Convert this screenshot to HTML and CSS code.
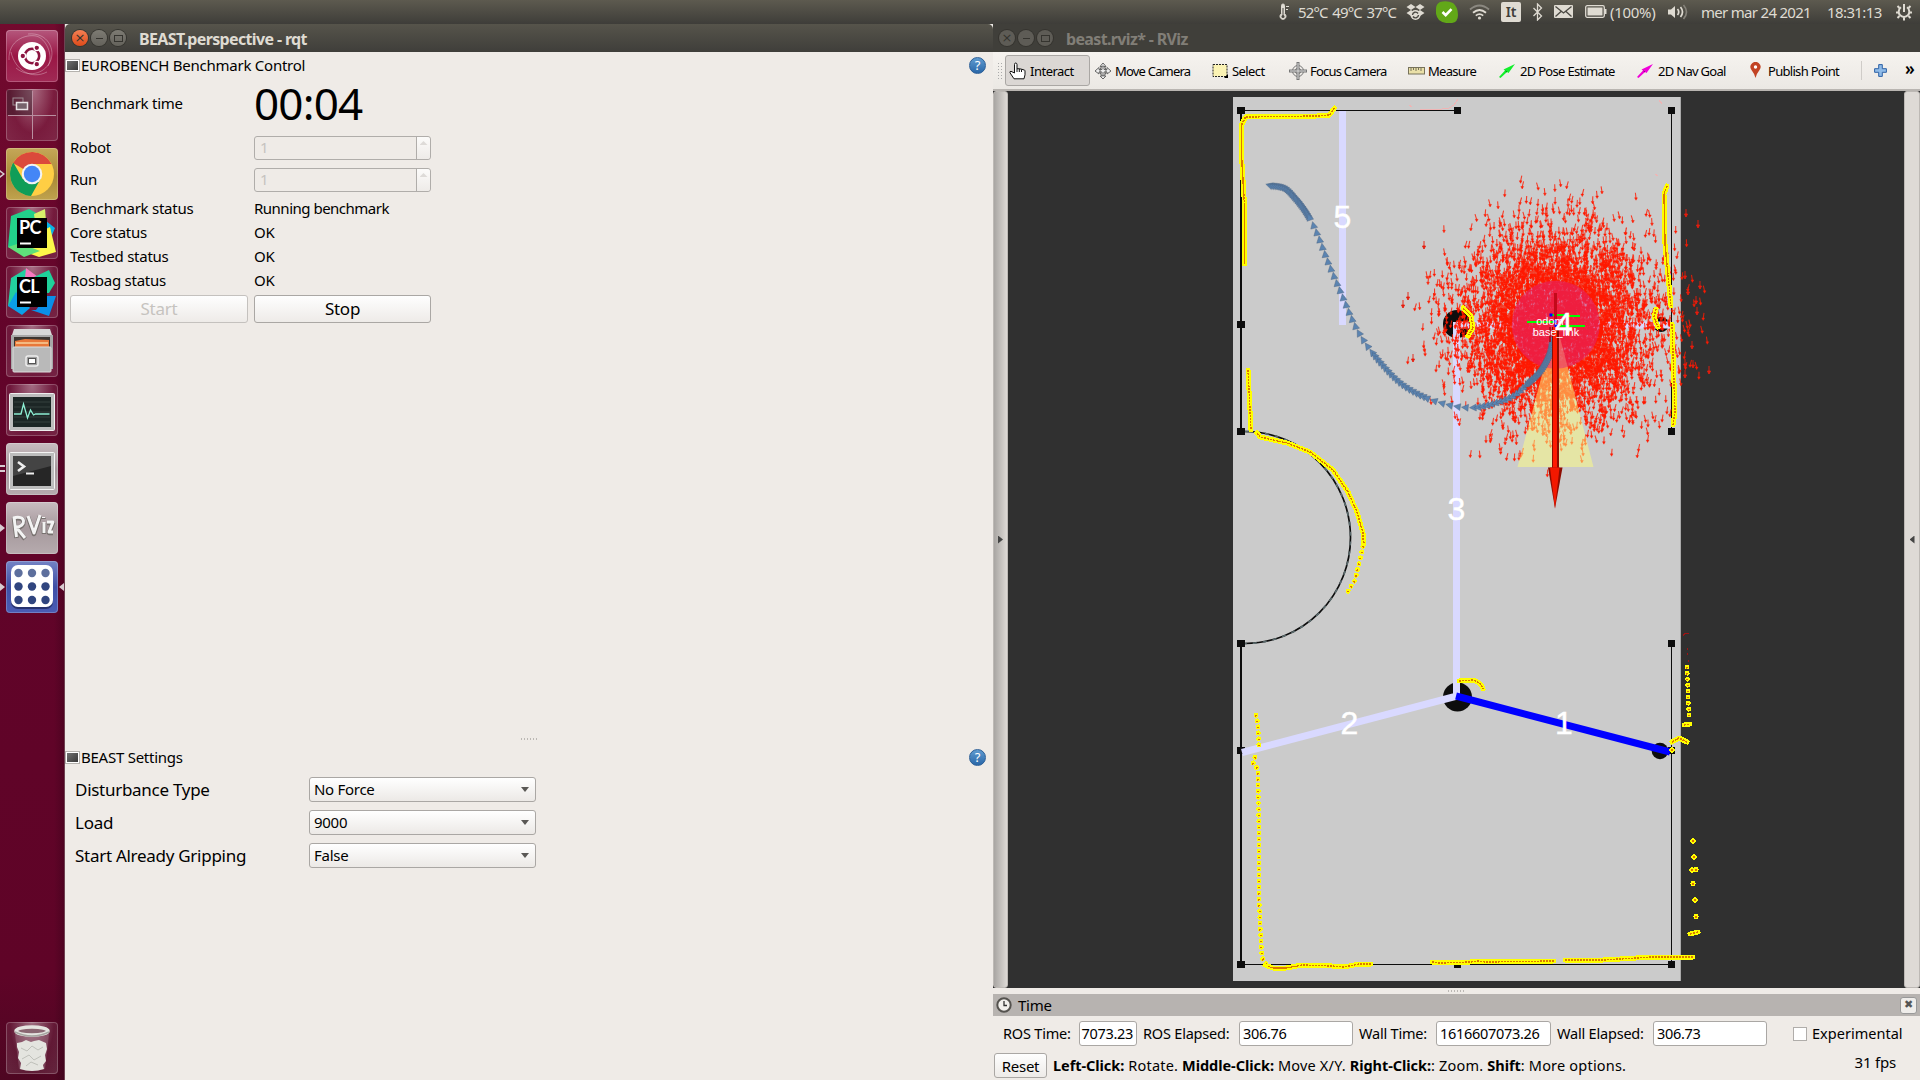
FILE: index.html
```html
<!DOCTYPE html>
<html lang="en">
<head>
<meta charset="utf-8">
<title>Desktop</title>
<link rel="stylesheet" href="styles.css">
</head>
<body>
<header class="tray">
  <svg class="t-thermo" width="12" height="18" viewBox="0 0 12 18"><path d="M4.5 2.5v8.2a3 3 0 1 0 3 0V2.500a1.500 1.500 0 0 0-3 0z" fill="#dfdbd2" stroke="#dfdbd2"/><path d="M6 5v8M9 4h3M9 7h2M9 10h3" stroke="#4a4842"/><circle cx="6" cy="13.500" r="1.500" fill="#4a4842"/><path d="M9 3.500h3M9 6.500h2" stroke="#dfdbd2"/></svg>
  <span class="t-temp">52°C 49°C 37°C</span>
  <svg class="t-drop" width="19" height="18" viewBox="0 0 19 18" fill="#dfdbd2"><path d="M5 1l4.500 3L5 7 .5 4zM14 1l4.500 3L14 7 9.500 4zM5 7l4.500 3L5 13 .5 10zM14 7l4.500 3-4.500 3-4.500-3z"/><circle cx="9.500" cy="12" r="5"/><path d="M6.500 12a3 3 0 0 1 5.500-1.500M12.500 12a3 3 0 0 1-5.500 1.500" fill="none" stroke="#4a4842" stroke-width="1.400"/></svg>
  <svg class="t-check" width="22" height="22" viewBox="0 0 22 22"><path d="M4 1Q11-1 17 2q5 4 5 12 0 7-6 8-8 1-13-3Q-1 14 0 8q0-5 4-7z" fill="#62a818"/><path d="M6.500 11l3.200 3.200 5.800-6" fill="none" stroke="#fff" stroke-width="2.600"/></svg>
  <svg class="t-wifi" width="21" height="16" viewBox="0 0 21 16" fill="none" stroke-width="1.800"><path d="M1 5.500q9.500-8 19 0" stroke="#8b8880"/><path d="M4 8.800q6.500-5.500 13 0M6.800 11.600q3.700-3 7.400 0" stroke="#dfdbd2"/><circle cx="10.500" cy="14" r="1.600" fill="#dfdbd2"/></svg>
  <span class="t-lang">It</span>
  <svg class="t-bt" width="11" height="18" viewBox="0 0 11 18"><path d="M1.500 5l8 8-4 4V1l4 4-8 8" fill="none" stroke="#dfdbd2" stroke-width="1.300"/></svg>
  <svg class="t-mail" width="19" height="13" viewBox="0 0 19 13"><rect width="19" height="13" rx="1" fill="#dfdbd2"/><path d="M1.500 1.500l8 6.500 8-6.500M1.500 11.500l5.500-5M17.500 11.500l-5.500-5" fill="none" stroke="#4a4842" stroke-width="1.300"/></svg>
  <svg class="t-bat" width="22" height="13" viewBox="0 0 22 13"><rect x=".7" y=".7" width="18.600" height="11.600" rx="1.500" fill="none" stroke="#dfdbd2" stroke-width="1.300"/><rect x="2.500" y="2.500" width="15" height="8" fill="#dfdbd2"/><path d="M20.500 4v5" stroke="#dfdbd2" stroke-width="2"/></svg>
  <span class="t-pct">(100%)</span>
  <svg class="t-vol" width="21" height="16" viewBox="0 0 21 16"><path d="M0 5.500h3L7 2v12L3 10.500H0z" fill="#dfdbd2"/><path d="M9.500 5q2.500 3 0 6M12.500 3q4 5 0 10" fill="none" stroke="#dfdbd2" stroke-width="1.700"/><path d="M15.500 1q6 7 0 14" fill="none" stroke="#85827a" stroke-width="1.600"/></svg>
  <span class="t-date">mer mar 24 2021</span>
  <span class="t-time">18:31:13</span>
  <svg class="t-gear" width="16" height="18" viewBox="0 0 16 18" fill="none" stroke="#dfdbd2"><path d="M5 4.300a5.300 5.300 0 1 0 6 0" stroke-width="2"/><path d="M8 1v8" stroke-width="2"/><path d="M3.500 5L1.500 3M12.500 5l2-2M2.500 9.500H0M13.500 9.500H16M3.500 13l-2 2M12.500 13l2 2M8 14.500V17.500" stroke-width="2"/></svg>
</header>

<div class="desktop">
<nav class="launcher">
  <div class="tile dash"><svg width="52" height="52" viewBox="0 0 52 52"><g fill="none" stroke="#fff" stroke-opacity=".3" stroke-width="1"><path d="M3 30C2 10 20 4 30 6s18 20 12 30" /><path d="M22 4c20-2 28 16 22 28S22 48 10 38"/><path d="M5 22c4 18 20 28 36 20"/></g><circle cx="26" cy="26" r="14" fill="#fff"/><circle cx="26" cy="26" r="7.200" fill="none" stroke="#8b1440" stroke-width="2.600"/><g fill="#8b1440" stroke="#fff" stroke-width="1.300"><circle cx="16.800" cy="26" r="2.800"/><circle cx="30.800" cy="17.800" r="2.800"/><circle cx="30.800" cy="34.200" r="2.800"/></g></svg></div>
  <div class="tile workspace"><svg width="52" height="52" viewBox="0 0 52 52"><rect x="1" y="1" width="25" height="25" fill="#291c24" opacity=".4"/><path d="M26.500 2v48M2 26.500h48" stroke="#b98fa0" stroke-width="1"/><rect x="7" y="9" width="10" height="7" fill="none" stroke="#9c8b92"/><rect x="10.500" y="13.500" width="11" height="7" fill="#76636c" stroke="#e8e2e5" stroke-width="1.500"/></svg></div>
  <div class="tile chrome"><svg width="52" height="52" viewBox="0 0 52 52"><circle cx="26" cy="26" r="22" fill="#ffce44"/><path d="M26 26L7 14.900A22 22 0 0 1 45.600 16H26z" fill="#db4a3b"/><path d="M26 26l-9.200 5L7.300 14.500A22 22 0 0 0 25 48l9.500-17z" fill="#109d58"/><circle cx="26" cy="26" r="10.300" fill="#f3f3f3"/><circle cx="26" cy="26" r="8.200" fill="#4486f6"/></svg><i class="run one"></i></div>
  <div class="tile glass"><svg width="52" height="52" viewBox="0 0 52 52"><path d="M5 9L23 2l9 5v20L20 46 2 40z" fill="#22d08a"/><path d="M28 7l11-5 1 12-10 8z" fill="#d8f06a"/><path d="M40 14l9 7-5 12-8-8z" fill="#08b4e8"/><path d="M44 20l6 25-17 5-17-6 20-20z" fill="#fcf84a"/><path d="M2 40l12-4 20 8-16 6z" fill="#5fe07a"/><rect x="11" y="11" width="30" height="30" fill="#000"/><path d="M14 36.500h11" stroke="#fff" stroke-width="2"/><text x="13" y="27" class="ide">PC</text></svg></div>
  <div class="tile glass"><svg width="52" height="52" viewBox="0 0 52 52"><path d="M5 12l15-9 8 10L12 42 2 40z" fill="#22cfa0"/><path d="M20 2l12 9-6 5-7-4z" fill="#f878c0"/><path d="M26 12l17-8 6 13-6 10H30z" fill="#1fd19a"/><path d="M2 40l8-14 14 16-8 7z" fill="#0a9fe8"/><path d="M30 44l10-14 10 0-7 20-18-6z" fill="#0a8fe8"/><rect x="11" y="11" width="30" height="30" fill="#000"/><path d="M14 36.500h11" stroke="#fff" stroke-width="2"/><text x="13" y="27" class="ide">CL</text></svg></div>
  <div class="tile glass"><svg width="52" height="52" viewBox="0 0 52 52"><path d="M8 4h36l3 9H5z" fill="#d8d8d8"/><rect x="5" y="10" width="42" height="34" fill="#a8a8a8"/><rect x="8" y="12" width="36" height="12" fill="#3c3632"/><path d="M9 16l10-2 24 1v8H9z" fill="#e8783a"/><path d="M10 18h32" stroke="#f8cf9a" stroke-width="1.500"/><rect x="7" y="22" width="38" height="25" rx="1" fill="#b9b9b9" stroke="#ddd"/><rect x="20" y="31" width="12" height="10" rx="2" fill="#a0a0a0" stroke="#eee" stroke-width="1.500"/><rect x="22.500" y="33.500" width="7" height="5" fill="#fff" stroke="#555"/></svg></div>
  <div class="tile glass"><svg width="52" height="52" viewBox="0 0 52 52"><rect x="3.500" y="9.500" width="45" height="37" rx="1" fill="#bdbdbd" stroke="#eee"/><rect x="7" y="13" width="38" height="30" fill="#1c2625"/><path d="M8 18h36M8 23h36M8 28h36M8 33h36M8 38h36" stroke="#34403e"/><path d="M8 30h7l2.500-10 4 14 3-8 3 5 2-1h14" fill="none" stroke="#8df0d4" stroke-width="1.300"/></svg></div>
  <div class="tile grey"><svg width="52" height="52" viewBox="0 0 52 52"><rect x="3.500" y="9.500" width="45" height="37" rx="1" fill="#bdbdbd" stroke="#f4f4f4"/><rect x="7" y="13" width="38" height="30" fill="#262626"/><path d="M7 13h38v10L7 33z" fill="#444"/><path d="M12 19l6 4.500-6 4.500" fill="none" stroke="#eee" stroke-width="2.600"/><path d="M20 30.500h8" stroke="#eee" stroke-width="2"/></svg><i class="run two"></i></div>
  <div class="tile grey"><svg width="52" height="52" viewBox="0 0 52 52"><g fill="none" stroke-linejoin="round"><path d="M8 16l2.500 20M7 17c14-4 13 9 3 9l9 11M22 15l6 17 6-18M38 21v11M37.500 16v1M41 21h6l-4 10h4" stroke="#77716f" stroke-width="4.500"/><path d="M8 15l2.500 20M7 16c14-4 13 9 3 9l9 11M22 14l6 17 6-18M38 20v11M37.500 15v1M41 20h6l-4 10h4" stroke="#f3f3f3" stroke-width="3"/></g></svg><i class="run tri"></i></div>
  <div class="tile blue"><svg width="52" height="52" viewBox="0 0 52 52"><rect x="5" y="6" width="42" height="42" rx="7" fill="#26326e"/><rect x="5" y="4" width="42" height="42" rx="7" fill="#fff"/><g fill="#5d6f9d"><circle cx="12.500" cy="12" r="4.200"/><circle cx="26" cy="12" r="4.200"/><circle cx="39.500" cy="12" r="4.200"/></g><g fill="#30457f"><circle cx="12.500" cy="25.500" r="4.200"/><circle cx="26" cy="25.500" r="4.200"/><circle cx="39.500" cy="25.500" r="4.200"/><circle cx="12.500" cy="39" r="4.200"/><circle cx="26" cy="39" r="4.200"/><circle cx="39.500" cy="39" r="4.200"/></g></svg><i class="run tri"></i><i class="focus"></i></div>
  <div class="tile glass trash"><svg width="52" height="52" viewBox="0 0 52 52"><path d="M9 12l4 35q13 4 26 0l4-35z" fill="#fff" opacity=".16"/><path d="M11 21l5-1 4-2 5 2 3-1 5-1 7 3 1 6-2 6 1 6-3 4 1 4q-12 4-24 0l1-6-3-5 1-6-2-5z" fill="#e4e4df"/><path d="M15 26l6 3 5-5 6 4 5-3M16 37l7-4 5 5 7-4M20 44l5-4 7 3" fill="none" stroke="#bfc0ba"/><ellipse cx="26" cy="9" rx="16" ry="4" fill="#8a6672" stroke="#e4e4e0" stroke-width="3.500"/><path d="M9 10q17 8 34 0" stroke="#a5a5a0" stroke-width="1.500" fill="none"/></svg></div>
</nav>

<section class="window rqt">
  <div class="titlebar active"><i class="wb close"></i><i class="wb min"></i><i class="wb max"></i><b>BEAST.perspective - rqt</b></div>
  <div class="panel control">
    <div class="dock-head"><i class="dockbox"></i><span>EUROBENCH Benchmark Control</span><i class="help">?</i></div>
    <div class="form">
      <label>Benchmark time</label><span class="clock">00:04</span>
      <label>Robot</label><div class="spin"><span>1</span><i></i></div>
      <label>Run</label><div class="spin"><span>1</span><i></i></div>
      <label>Benchmark status</label><span class="wide">Running benchmark</span>
      <label>Core status</label><span>OK</span>
      <label>Testbed status</label><span>OK</span>
      <label>Rosbag status</label><span>OK</span>
      <button class="btn off">Start</button><button class="btn">Stop</button>
    </div>
  </div>
  <div class="grip"></div>
  <div class="panel settings">
    <div class="dock-head"><i class="dockbox"></i><span>BEAST Settings</span><i class="help">?</i></div>
    <div class="options">
      <label>Disturbance Type</label><div class="combo">No Force</div>
      <label>Load</label><div class="combo">9000</div>
      <label>Start Already Gripping</label><div class="combo">False</div>
    </div>
  </div>
</section>

<section class="window rviz">
  <div class="titlebar"><i class="wb close"></i><i class="wb min"></i><i class="wb max"></i><b>beast.rviz* - RViz</b></div>
  <div class="toolbar">
    <i class="handle"></i>
    <div class="tool pressed"><svg width="18" height="18" viewBox="0 0 18 18"><path d="M5.500 11V2.500q0-1.500 1.200-1.500T8 2.500V7q1-1 2 0 1-.8 2 .3 1-.6 2 .5 1.500-.5 2 1v4l-1 4H5l-4-6q-.5-1.500 1-1.500z" fill="#fff" stroke="#111"/><path d="M8 7v3M10.300 7v3M12.500 7.500V10" stroke="#111"/></svg><span>Interact</span></div>
    <div class="tool mv"><svg width="18" height="18" viewBox="0 0 18 18" fill="#eee" stroke="#666"><path d="M9 1l3 3.500h-2v3h3V5.500L17 9l-4 3v-2h-3v4h2l-3 3-3-3h2v-4H5v2L1 9l4-3.500v2h3v-3H6z"/><ellipse cx="9" cy="9" rx="3" ry="5" fill="none"/></svg><span>Move Camera</span></div>
    <div class="tool sel"><svg width="17" height="16" viewBox="0 0 17 16"><rect x="1" y="1.500" width="14" height="12" fill="#fbf3b4" stroke="#222" stroke-dasharray="2 1"/><path d="M16 11v4h-4z"/></svg><span>Select</span></div>
    <div class="tool foc"><svg width="18" height="18" viewBox="0 0 18 18" fill="none" stroke="#777"><circle cx="9" cy="9" r="5.500"/><circle cx="9" cy="9" r="2.800"/><path d="M9 0v18M0 9h18" stroke-width="3"/><path d="M9 1v16M1 9h16" stroke="#ddd"/></svg><span>Focus Camera</span></div>
    <div class="tool mea"><svg width="17" height="8" viewBox="0 0 17 8"><rect x=".5" y=".5" width="16" height="6.500" fill="#eae0a8" stroke="#77725a"/><path d="M3 1v3M5.500 1v2M8 1v3M10.500 1v2M13 1v3" stroke="#77725a"/></svg><span>Measure</span></div>
    <div class="tool pose"><svg width="16" height="16" viewBox="0 0 16 16"><path d="M0 14L6 7.500 4.500 6.500 16 1 9.500 10 8 9 1.500 15z" fill="#12ef2c"/><path d="M6.500 8l1.500 1" stroke="#0a7a18"/></svg><span>2D Pose Estimate</span></div>
    <div class="tool nav"><svg width="16" height="16" viewBox="0 0 16 16"><path d="M0 14L6 7.500 4.500 6.500 16 1 9.500 10 8 9 1.500 15z" fill="#f000d8"/><path d="M6.500 8l1.500 1" stroke="#80106f"/></svg><span>2D Nav Goal</span></div>
    <div class="tool pub"><svg width="11" height="17" viewBox="0 0 11 17"><path d="M5.500 16Q4 11 1.500 8A5 5 0 1 1 9.500 8Q7 11 5.500 16z" fill="#c24324"/><circle cx="5.500" cy="5" r="1.700" fill="#fff"/></svg><span>Publish Point</span></div>
    <i class="sep"></i>
    <svg class="plus" width="13" height="13" viewBox="0 0 13 13"><path d="M4.700.6h3.600v4.100h4.100v3.600H8.300v4.100H4.700V8.300H.6V4.700h4.100z" fill="#8fbbe8" stroke="#2e62a6"/></svg>
    <span class="more">»</span>
  </div>
  <div class="view">
    <div class="side"><i class="arrow-r"></i></div>
    <svg class="scene" width="896" height="897" viewBox="1008 91 896 897">
      <rect x="1233" y="97" width="448" height="884" fill="#cbcbcb"/>
      <path d="M1680.500 97v884" stroke="#a9a9a9"/>
      <g fill="none" stroke="#0d0d0d" shape-rendering="crispEdges"><path d="M1241 110V431M1241 643V964" stroke-width="2"/><path d="M1241 110.500H1457M1671.500 110V431M1671.500 643V964M1241 964.500H1671"/></g>
      <path d="M1245 431.500A105.500 106 0 0 1 1245 643.500" fill="none" stroke="#0d0d0d" stroke-width="1.700"/>
      <path d="M1245 431.500A105.500 106 0 0 1 1245 643.500" fill="none" stroke="#58686a" stroke-width="1.700" stroke-dasharray="4 6"/>
      <g id="posts" fill="#0d0d0d"></g>
      <g fill="#0d0d0d"><circle cx="1457.500" cy="697" r="14.500"/><circle cx="1660" cy="751" r="8.300"/><circle cx="1457" cy="324" r="14"/><ellipse cx="1661" cy="324.500" rx="8" ry="7.500"/></g>
      <g stroke="#d9d9ff" stroke-width="7" fill="none"><path d="M1342.500 111V325M1456.500 322V698M1456 325H1671M1457 696L1242 752.500"/></g>
      <path d="M1456 696l214 56" stroke="#00f" stroke-width="7"/>
      <g id="particles" fill="none"></g>
      <g id="lasers" fill="none" shape-rendering="crispEdges"></g>
      <path d="M1556 322L1517.500 467h76z" fill="#ffff80" fill-opacity=".5"/>
      <circle cx="1555.700" cy="324.700" r="44" fill="#df247e" fill-opacity=".5"/>
      <g id="trail" fill="#5b84b1" stroke="#4a627f" stroke-width=".4"></g>
      <g shape-rendering="crispEdges"><path d="M1527 321.500h28M1552 314.500l28 2M1560 325.500h25" stroke="#0f0" stroke-width="2"/><path d="M1555.500 293v32" stroke="#c20a1a" stroke-width="3"/><path d="M1549.500 327v15" stroke="#b01020" stroke-width="2"/></g>
      <rect x="1552" y="327" width="7" height="141" fill="#8e0b00"/><rect x="1553" y="327" width="4" height="141" fill="#ff1a00"/>
      <path d="M1548 467.500h14.500l-7.500 41z" fill="#8e0b00"/><path d="M1550 467.500h9.500l-4.500 41z" fill="#f31800"/>
      <g fill="#00f"><rect x="1549.500" y="313.500" width="3" height="3"/><rect x="1554" y="320" width="3" height="3"/><rect x="1554.500" y="324" width="3" height="3"/></g>
      <g class="frame"><text x="1550" y="325">odom</text><text x="1556" y="336">base_link</text></g>
      <g class="seg"><text x="1564" y="734">1</text><text x="1349.500" y="734">2</text><text x="1456.500" y="520">3</text><text x="1564" y="335">4</text><text x="1342.500" y="228">5</text></g>
    </svg>
    <div class="side"><i class="arrow-l"></i></div>
  </div>
  <div class="grip mid"></div>
  <div class="timehead"><svg width="16" height="16" viewBox="0 0 16 16"><circle cx="8" cy="8" r="6.700" fill="#f2f0ec" stroke="#55534f" stroke-width="2"/><path d="M8 4v4.500h3" fill="none" stroke="#333" stroke-width="1.300"/></svg><span>Time</span><i class="xbtn">✖</i></div>
  <div class="timerow">
    <label class="l1">ROS Time:</label><div class="inp i1"><span>7073.23</span></div>
    <label class="l2">ROS Elapsed:</label><div class="inp i2">306.76</div>
    <label class="l3">Wall Time:</label><div class="inp i3">1616607073.26</div>
    <label class="l4">Wall Elapsed:</label><div class="inp i4">306.73</div>
    <i class="chk"></i><label class="l5">Experimental</label>
  </div>
  <div class="status"><button class="btn reset">Reset</button><span class="hint"><b>Left-Click:</b> Rotate. <b>Middle-Click:</b> Move X/Y. <b>Right-Click:</b>: Zoom. <b>Shift</b>: More options.</span><span class="fps">31 fps</span></div>
</section>
</div>
<script src="scene.js"></script>
</body>
</html>
```
FILE: styles.css
```css
* { box-sizing: border-box; }
body { margin: 0; width: 1920px; height: 1080px; overflow: hidden; background: #5e0427; font: 15px/20px "Noto Sans", "Open Sans", sans-serif; color: #000; letter-spacing: -0.25px; }
i { font-style: normal; }
svg { display: block; flex: none; }
button { font: inherit; letter-spacing: inherit; padding: 0; margin: 0; }

.tray { height: 24px; background: linear-gradient(#5d5a4f, #3e3d39); display: flex; align-items: center; padding: 0 0 1px 1277px; color: #dfdbd2; white-space: nowrap; }
.tray span { flex: none; }
.tray svg { margin-right: auto; }
.tray .t-thermo { margin-right: 9px; }
.t-temp { width: 108px; letter-spacing: -0.85px; word-spacing: 1.5px; }
.tray .t-drop { margin-right: 11px; }
.tray .t-check { margin-right: 11px; }
.tray .t-wifi { margin-right: 11px; }
.t-lang { width: 20px; height: 20px; border-radius: 2px; background: #dfdbd2; color: #3e3d39; text-align: center; font-weight: 600; margin-right: 11px; font-size: 14px; }
.tray .t-bt { margin-right: 11px; }
.tray .t-mail { margin-right: 12px; }
.tray .t-bat { margin-right: 3px; }
.t-pct { width: 58px; letter-spacing: -0.3px; }
.tray .t-vol { margin-right: 12px; }
.t-date { width: 126px; letter-spacing: -0.7px; }
.t-time { width: 69px; letter-spacing: -0.6px; }

.desktop { display: flex; height: 1056px; }
.launcher { width: 65px; padding: 6px 0 6px 6px; display: flex; flex-direction: column; gap: 7px; background: linear-gradient(90deg, transparent 54px, rgba(30,0,15,.25)), linear-gradient(#730a2e, #62042a 30%, #5f0427 90%, #4e0622); border-right: 1px solid #6f4152; }
.tile { position: relative; width: 52px; height: 52px; border-radius: 4px; box-shadow: inset 0 0 0 1px rgba(255,255,255,.22); flex: none; overflow: visible; }
.dash { background: linear-gradient(#b5587d, #9a1645 50%, #a02a55); }
.workspace, .glass { background: radial-gradient(ellipse at 50% 0, rgba(255,255,255,.42), rgba(255,255,255,.08) 60%, rgba(255,255,255,.13)); }
.chrome { background: linear-gradient(#c5a758, #a98a36 55%, #c0a34e); }
.grey { background: linear-gradient(#c8bcc0, #a5989c 50%, #b6abae); }
.blue { background: linear-gradient(#7483c4, #3f4fa6 50%, #4a5db4); }
.trash { margin-top: auto; }
.ide { font: 700 18px Lato, "Open Sans", sans-serif; fill: #fff; letter-spacing: -0.6px; }
.run, .focus { position: absolute; width: 5px; height: 8px; left: -6px; top: 22px; }
.tri { background: #d8ccd1; clip-path: polygon(0 0, 100% 50%, 0 100%); }
.one { background: #d8ccd1; clip-path: polygon(0 0, 100% 50%, 0 100%, 0 75%, 55% 50%, 0 25%); }
.two { border-top: 2px solid #d8ccd1; border-bottom: 2px solid #d8ccd1; height: 7px; }
.focus { left: 53px; background: #d8ccd1; clip-path: polygon(100% 0, 0 50%, 100% 100%); }

.window { display: flex; flex-direction: column; background: #efebe7; }
.rqt { width: 928px; }
.rviz { width: 927px; }
.titlebar { height: 28px; display: flex; align-items: center; gap: 3px; padding-left: 6px; background: #403f3a; color: #817e77; font-size: 16px; }
.titlebar b { margin: 1px 0 0 10px; letter-spacing: -0.65px; }
.titlebar.active { padding-left: 7px; background: linear-gradient(#56544b, #3f3e3a); color: #dfdbd2; border-radius: 5px 5px 0 0; }
.wb { width: 16px; height: 16px; border-radius: 8px; background: #5e5c56; box-shadow: 0 0 0 1px #35342f; display: grid; place-items: center; color: #35342f; }
.active .wb { background: linear-gradient(#7d7b73, #64625b); }
.active .close { background: linear-gradient(#f58054, #df4b1a); }
.close::before { content: "×"; font: 13px/14px "DejaVu Sans", sans-serif; height: 15px; letter-spacing: 0; }
.min::before { content: ""; width: 7px; height: 1px; background: currentColor; }
.max::before { content: ""; width: 7px; height: 5px; border: 1px solid currentColor; }

.control { height: 684px; padding-top: 3px; }
.dock-head { display: flex; align-items: center; height: 20px; padding-right: 7px; }
.dockbox { width: 15px; height: 13px; margin: 0 1px 0 0; border: 1px solid #b5b2ae; outline: 1px solid #fff; outline-offset: -2px; background: linear-gradient(135deg, #777, #333); background-clip: content-box; padding: 1px; }
.help { margin-left: auto; width: 17px; height: 17px; border-radius: 9px; background: linear-gradient(#5f9bd0, #2a67a8); border: 1px solid #2c5f98; color: #fff; font-size: 13px; line-height: 15px; text-align: center; }
.form { display: grid; grid-template-columns: 184px 177px; grid-template-rows: 56px 32px 32px 25px 24px 24px 24px 31px; align-items: center; padding-left: 5px; }
.form .wide { letter-spacing: -0.5px; }
.clock { font-size: 44px; line-height: 56px; letter-spacing: -0.8px; }
.spin { height: 24px; border: 1px solid #b0adaa; border-radius: 3px; display: flex; color: #c6c3bf; margin-top: 2px; }
.spin span { flex: 1; padding-left: 5px; }
.spin i { width: 14px; border-left: 1px solid #b0adaa; background: linear-gradient(#fcfbfa, #eeebe8); display: grid; justify-items: center; border-radius: 0 3px 3px 0; }
.spin i::before { content: ""; margin-top: 4px; width: 8px; height: 4px; background: #dedbd8; clip-path: polygon(50% 0, 100% 100%, 0 100%); }
.btn { height: 28px; border: 1px solid #aaa7a4; border-radius: 3px; background: linear-gradient(#fefefe, #eeebe8); font-size: 17px; line-height: 24px; color: #000; margin-top: 3px; }
.btn.off { width: 178px; color: #c6c3bf; border-color: #c4c1be; }

.grip { height: 6px; flex: none; display: flex; justify-content: center; align-items: center; }
.grip::before { content: ""; width: 17px; height: 2px; background: repeating-linear-gradient(90deg, #bbb8b4 0 1px, transparent 1px 3px); }
.settings { padding-top: 5px; height: 338px; }
.options { display: grid; grid-template-columns: 234px 227px; grid-auto-rows: 33px; align-items: center; padding: 6px 0 0 10px; font-size: 17px; letter-spacing: -0.28px; }
.combo { height: 25px; border: 1px solid #aaa7a4; border-radius: 3px; background: linear-gradient(#fff, #ece9e6); font-size: 15px; line-height: 23px; padding: 0 6px 0 4px; display: flex; justify-content: space-between; align-items: center; }
.combo::after { content: ""; width: 8px; height: 5px; background: #5a5855; clip-path: polygon(0 0, 100% 0, 50% 100%); }

.toolbar { height: 39px; flex: none; display: flex; align-items: center; padding-left: 4px; background: linear-gradient(#f6f3ef, #ebe8e4); border-bottom: 2px solid #b9b5b1; font-size: 13px; letter-spacing: -0.7px; white-space: nowrap; }
.handle { width: 5px; height: 17px; background: radial-gradient(#aaa 0.7px, transparent 1px) 0 0 / 3px 3px; margin-right: 3px; }
.tool { display: flex; align-items: center; gap: 3px; height: 31px; flex: none; width: 75px; }
.pressed { width: 85px; padding-left: 3px; background: #dbd7d4; border: 1px solid #aaa7a4; border-radius: 3px; margin-right: 4px; letter-spacing: -0.5px; }
.mv { width: 118px; letter-spacing: -0.8px; } .sel { width: 77px; letter-spacing: -0.6px; } .foc { width: 119px; letter-spacing: -0.78px; } .mea { width: 91px; } .pose { width: 138px; gap: 5px; } .nav { width: 113px; gap: 5px; } .pub { width: 111px; gap: 7px; }
.sep { width: 1px; height: 19px; background: #cfccc8; margin-right: 12px; }
.more { margin-left: 18px; font-size: 17px; font-weight: 600; margin-top: -4px; }

.view { display: flex; height: 897px; flex: none; background: #303030; }
.side { width: 15px; border: 1px solid #bdb9b5; border-radius: 3px; display: grid; align-items: center; justify-items: center; }
.side:first-child { background: linear-gradient(90deg, #a8a5a2, #dedad6); }
.side:last-child { width: 16px; background: #dedad6; }
.arrow-r, .arrow-l { width: 5px; height: 8px; background: #444; clip-path: polygon(0 0, 100% 50%, 0 100%); }
.arrow-l { clip-path: polygon(100% 0, 0 50%, 100% 100%); }
.seg { font: 32px "Liberation Sans", Arial, sans-serif; fill: #fff; stroke: #fff; stroke-width: .4; text-anchor: middle; letter-spacing: 0; }
.frame { font: 11px "Liberation Sans", Arial, sans-serif; fill: #fff; text-anchor: middle; letter-spacing: 0; }

.timehead { height: 22px; flex: none; background: #b7b3b0; display: flex; align-items: center; padding: 0 3px 0 3px; }
.timehead span { margin-left: 6px; }
.xbtn { margin-left: auto; width: 17px; height: 17px; border: 1px solid #999; border-radius: 3px; background: #efedea; color: #555; font: 11px/14px "DejaVu Sans", sans-serif; text-align: center; }
.timerow { display: flex; align-items: center; height: 35px; padding-left: 10px; flex: none; white-space: nowrap; }
.timerow label { flex: none; letter-spacing: -0.2px; font-size: 14.500px; margin-top: -1px; }
.inp { height: 25px; border: 1px solid #aaa7a4; border-radius: 3px; background: #fff; line-height: 22px; padding-left: 3px; flex: none; letter-spacing: -0.3px; font-size: 14.500px; overflow: hidden; }
.l1 { width: 76px; } .i1 { width: 58px; margin-right: 6px; padding: 0 3px 0 0; display: flex; justify-content: flex-end; }
.l2 { width: 96px; } .i2 { width: 114px; margin-right: 6px; }
.l3 { width: 77px; } .i3 { width: 115px; margin-right: 6px; }
.l4 { width: 96px; } .i4 { width: 114px; margin-right: 26px; }
.timerow .l5 { letter-spacing: 0.02px; }
.chk { width: 14px; height: 14px; background: #fff; border: 1px solid #b0adaa; margin-right: 5px; }
.status { display: flex; height: 29px; align-items: center; padding: 0 24px 0 1px; flex: none; white-space: nowrap; }
.reset { width: 53px; height: 25px; font-size: 15px; line-height: 22px; margin: 0 6px 0 0; }
.hint { font-size: 14.500px; letter-spacing: 0.2px; margin-top: -1px; }
.hint b { letter-spacing: -0.05px; }
.fps { margin: -7px 0 0 auto; letter-spacing: -0.2px; }
```
FILE: scene.js
```js
const NS = "http://www.w3.org/2000/svg";
function add(parent, tag, attrs) {
  const el = document.createElementNS(NS, tag);
  for (const k in attrs) el.setAttribute(k, attrs[k]);
  document.getElementById(parent).appendChild(el);
  return el;
}

let seed = 77;
function rnd() {
  seed = (seed + 0x6d2b79f5) | 0;
  let t = Math.imul(seed ^ (seed >>> 15), 1 | seed);
  t = (t + Math.imul(t ^ (t >>> 7), 61 | t)) ^ t;
  return ((t ^ (t >>> 14)) >>> 0) / 4294967296;
}

// wall corner posts
[[1241,110.5],[1241,324.5],[1241,431.5],[1241,643.5],[1241,750.5],[1241,964.5]]
  .forEach(([x, y]) => add("posts", "rect", { x: x - 4, y: y - 3.5, width: 8, height: 7 }));
[[1457.5,110.5],[1671.5,110.5],[1671.5,431.5],[1671.5,643.5],[1671.5,750.5],[1671.5,964.5],[1457.5,964.5]]
  .forEach(([x, y]) => add("posts", "rect", { x: x - 3.5, y: y - 3.5, width: 7, height: 7 }));

// pose particles: a faint shaft and a solid head per arrow
let shafts = "", heads = "";
for (let i = 0; i < 5600; i++) {
  const r = 47 * Math.sqrt(-2 * Math.log(1 - rnd()));
  const a = rnd() * Math.PI * 2;
  if (r > 156) continue;
  const x = 1556 + r * Math.cos(a), y = 326 + r * Math.sin(a), d = (rnd() - 0.5) * 3.4;
  shafts += `M${(x - d).toFixed(1)} ${(y - 4.5).toFixed(1)}L${x.toFixed(1)} ${(y + 1).toFixed(1)}`;
  heads += `M${(x - 1.4).toFixed(1)} ${(y + 0.6).toFixed(1)}h2.800l-1.400 2.500z`;
}
add("particles", "path", { d: shafts, stroke: "#ff1a00", "stroke-opacity": 0.8, "stroke-width": 1.1 });
add("particles", "path", { d: heads, fill: "#ff1a00", stroke: "#ff1a00", "stroke-width": 0.4 });
// stragglers beyond the wall
[[1686,214],[1698,225],[1685,276],[1688,292],[1700,286],[1696,301],[1697,312],[1692,346],[1693,365],[1709,371],[1685,375],[1685,364],[1403,305],[1408,297],[1413,359],[1424,246]]
  .forEach(([x, y]) => add("particles", "path", { d: `M${x} ${y - 5}V${y + 1}M${x - 1.5} ${y}h3l-1.500 3z`, stroke: "#e81c0c", "stroke-width": 0.9, fill: "#e81c0c" }));

// laser returns: continuous runs and isolated hits
const solid = [
  "M1334.500 108l-5 7-12 1-72 1-4 8 0 30 3 50 0 59",
  "M1248 370l3 60", "M1257 433l3 4 27 6 23 9 23 18 15 22 9 20 6 21 0 7 1 3-1 3",
  "M1667 186l-3 8 1 50 6 62", "M1672 324l3 88-2 13", "M1656 309l-2 8 4 10",
  "M1463 308l8 8 2 12-5 8", "M1459 681l14-1q8 2 10 9",
  "M1672 742l7-4 8 4", "M1265 965l8 3 13 0 16-3 30 1 12 1 15-3 12 0",
  "M1432 962l8 1 30-1 8-1 8 1 68-1", "M1565 960l38 0 50-3 40 0",
  "M1684 725l6-1", "M1690 934l8-2"
];
const dotted = [
  "M1363 546l-3 14-5 20-8 13", "M1256 715l2 9 1 26", "M1255 757l-2 7 5 5",
  "M1258 773l1 60 0 60 1 30 2 35 4 6",
  "M1687 667l2 50"
];
solid.forEach(d => {
  add("lasers", "path", { d, stroke: "#ff0", "stroke-width": 5, "stroke-linecap": "round", "stroke-linejoin": "round" });
  add("lasers", "path", { d, stroke: "#dc7800", "stroke-width": 1.4, "stroke-dasharray": "2.2 .8" });
});
dotted.forEach(d => {
  add("lasers", "path", { d, stroke: "#ff0", "stroke-width": 4.8, "stroke-linecap": "round", "stroke-dasharray": "0.2 5.8" });
  add("lasers", "path", { d, stroke: "#e07000", "stroke-width": 2, "stroke-dasharray": "1.5 4.5" });
});
[[1693,841],[1694,857],[1692,870],[1696,869.5],[1693,883.5],[1695,900],[1696,916.5],[1672,750]].forEach(([cx, cy]) => {
  add("lasers", "circle", { cx, cy, r: 2.6, fill: "#ff0" });
  add("lasers", "rect", { x: cx - 1, y: cy - 1, width: 2, height: 2, fill: "#e07000" });
});
add("lasers", "path", { d: "M1683 636l2-3h4M1687 648v2M1687 653v2M1688 660v2", stroke: "#9c1414", "stroke-width": 1 });
add("lasers", "path", { d: "M1409 105l3 2M1420 109l15 1 14-2 5-3 4-6M1659 100l3 4M1655 174l3 2", stroke: "#f0b4b4", "stroke-width": 1 });

// driven path, drawn as heading arrows
const pts = [[137,285],[190,293],[225,323],[262,372],[292,432],[325,518],[370,625],[402,700],[435,758],[485,822],[540,878],[600,915],[660,938],[720,951],[770,952],[825,940],[880,918],[925,880],[962,843],[988,795],[999,748]]
  .map(([x, y]) => [1220 + x / 3, 90 + y / 3]);
let d = `M${pts[0]}`;
for (let i = 0; i < pts.length - 1; i++) {
  const p0 = pts[i - 1] || pts[i], p1 = pts[i], p2 = pts[i + 1], p3 = pts[i + 2] || p2;
  d += `C${p1[0] + (p2[0] - p0[0]) / 6} ${p1[1] + (p2[1] - p0[1]) / 6} ${p2[0] - (p3[0] - p1[0]) / 6} ${p2[1] - (p3[1] - p1[1]) / 6} ${p2[0]} ${p2[1]}`;
}
const line = add("trail", "path", { d, fill: "none", stroke: "none" });
const len = line.getTotalLength();
for (let s = 0; s < len - 3;) {
  const p = line.getPointAtLength(s), q = line.getPointAtLength(s + 4);
  const a = Math.atan2(p.y - q.y, p.x - q.x) * 180 / Math.PI + (s / len < 0.4 ? 12 : 0);
  add("trail", "path", { d: "M4 0L-2.800 3.500V-3.500z", transform: `translate(${q.x} ${q.y}) rotate(${a})` });
  const f = s / len;
  s += f < 0.12 ? 2 : f < 0.135 ? 9 : f < 0.46 ? 7.8 : f < 0.62 ? 4 : f < 0.72 ? 8 : f < 0.86 ? 4.5 : 2;
}
```
